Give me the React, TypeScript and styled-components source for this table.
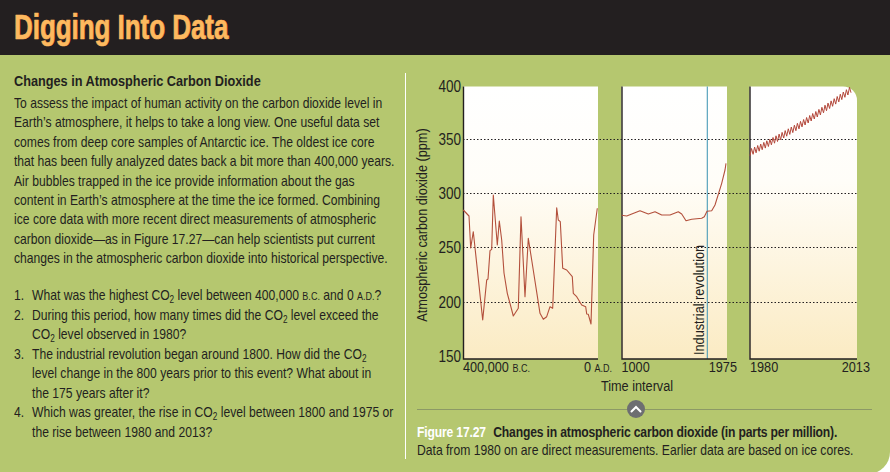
import React from 'react';
import styled, { createGlobalStyle } from 'styled-components';

const GlobalStyle = createGlobalStyle`
  html, body {
    margin: 0;
    padding: 0;
    overflow: hidden;
    background: #ffffff;
  }
  * {
    box-sizing: border-box;
  }
`;

// no condensed face is installed, so Arial metrics get squeezed horizontally
const sans = `"Liberation Sans", Arial, sans-serif`;
const SQUEEZE = 0.82;

const Page = styled.div`
  width: 890px;
  height: 472px;
  overflow: hidden;
  background: #ffffff;
  font-family: ${sans};
  color: #231f20;
`;

const Header = styled.header`
  height: 55px;
  background: #231f20;
  padding: 4px 0 0 14px;
`;

const Title = styled.h1`
  display: inline-block;
  margin: 0;
  font-size: 35px;
  line-height: 46px;
  font-weight: bold;
  white-space: nowrap;
  color: #fdb95f;
  -webkit-text-stroke: 0.7px #fdb95f;
  text-shadow: 1px 0 0 #7c3517;
  transform: scaleX(0.74);
  transform-origin: 0 0;
`;

const Body = styled.main`
  display: grid;
  grid-template-columns: 405px minmax(0, 1fr);
  height: 419px;
  background: #b5c76f;
  border-bottom-right-radius: 22px;
  overflow: hidden;
`;

const TextColumn = styled.section`
  padding: 17px 0 0 14px;
  overflow: hidden;
`;

const Condensed = styled.div`
  width: 480px;
  transform: scaleX(${SQUEEZE});
  transform-origin: 0 0;
  white-space: nowrap;
`;

const Heading = styled.h2`
  margin: 0;
  font-size: 15.5px;
  line-height: 18px;
  font-weight: bold;
`;

const Intro = styled.p`
  margin: 4px 0 0;
  font-size: 14.8px;
  line-height: 19.4px;
`;

const Questions = styled.ol`
  margin: 17px 0 0;
  padding: 0;
  list-style: none;
  font-size: 14.8px;
  line-height: 19.4px;
`;

const Question = styled.li`
  display: grid;
  grid-template-columns: 22px 1fr;
`;

const Sub = styled.sub`
  font-size: 10px;
  line-height: 0;
  vertical-align: -3px;
`;

const SmallCaps = styled.span`
  font-size: 11px;
`;

const FigureColumn = styled.section`
  min-width: 0;
  margin: 18px 0 17px;
  border-left: 1px solid #ffffff;
  display: flex;
  flex-direction: column;
`;

const ChartSvg = styled.svg`
  display: block;
  width: 484px;
  height: 322px;
  font-family: ${sans};
`;

const AxisText = styled.text<{ $size?: number }>`
  font-size: ${p => p.$size ?? 15.5}px;
  fill: #231f20;
`;

const CaptionBar = styled.div`
  position: relative;
  height: 18px;
  margin: 5px 18px 0 11px;
  display: flex;
  align-items: center;
`;

const Rule = styled.div`
  flex: 1;
  height: 1px;
  background: #8c9966;
`;

const Toggle = styled.button`
  position: absolute;
  left: 210px;
  top: 0;
  width: 18px;
  height: 18px;
  padding: 0;
  border: none;
  border-radius: 50%;
  background: #6d6e71;
  display: flex;
  align-items: center;
  justify-content: center;
`;

const CaptionWrap = styled.div`
  margin: 5px 0 0 11px;
  overflow: hidden;
`;

const Caption = styled.p`
  margin: 0;
  width: 560px;
  font-size: 14.8px;
  line-height: 18px;
  white-space: nowrap;
  transform: scaleX(${SQUEEZE});
  transform-origin: 0 0;
`;

const FigureLabel = styled.span`
  color: #ffffff;
  font-weight: bold;
  letter-spacing: -0.2px;
  margin-right: 9px;
`;

const CaptionTitle = styled.span`
  font-weight: bold;
  letter-spacing: -0.2px;
`;

const CO2 = () => (
  <>
    CO<Sub>2</Sub>
  </>
);

type LabelProps = {
  x: number;
  y: number;
  anchor?: 'start' | 'middle' | 'end';
  rotate?: boolean;
  size?: number;
  children: React.ReactNode;
};

const Label = ({ x, y, anchor = 'start', rotate, size, children }: LabelProps) => (
  <AxisText
    $size={size}
    textAnchor={anchor}
    transform={`translate(${x} ${y})${rotate ? ' rotate(-90)' : ''} scale(${SQUEEZE} 1)`}
  >
    {children}
  </AxisText>
);

const iceCore =
  '463.3,210 469,216 470.7,248 473.3,231.7 482.7,320 486.7,280 488,279 490,250.7 491.7,249.3 493.3,195 497.3,245 499.3,221 501.7,240 504,273 507.3,293.3 513.3,316 518.3,308.3 521,216.7 525,296.7 528.3,238.3 531.7,260 540,313.3 543.3,319.3 546.7,316.7 550,306.7 552.7,308.3 556.7,207.7 558.3,220 560.3,221.7 562.7,268.3 566.7,270 572.3,276.7 573.3,293.3 576.7,296.7 581.7,305 585.7,306.7 586.7,314 588.3,314.3 591,324 593.7,235 597.3,208.3';

const millennium =
  '621.7,215.3 626.7,216 640,210.7 648.3,214 655,211.7 661.7,215 670,215 678.3,211.7 681.7,214 686,220.7 691.7,219.3 701.7,218.3 704.3,216.7 707,211.3 711.7,210.7 715,205 721.7,183.3 725,170 726,163.3';

const yOf = (ppm: number) => 86 + (400 - ppm) * 1.085;

const keeling = (() => {
  const pts: string[] = [];
  const x0 = 750;
  const x1 = 851;
  const steps = 66;
  for (let i = 0; i <= steps; i++) {
    const t = (i / steps) * 33;
    const base = 338.7 + 1.35 * t + 0.0125 * t * t;
    const season = i % 2 === 0 ? -3 : 3;
    const x = x0 + ((x1 - x0) * i) / steps;
    pts.push(`${x.toFixed(1)},${yOf(base + season).toFixed(1)}`);
  }
  return pts.join(' ');
})();

const gridLines = [139.5, 193.5, 247.5, 302.5];
const yTicks = [
  { label: '400', y: 86.5 },
  { label: '350', y: 139.5 },
  { label: '300', y: 193.5 },
  { label: '250', y: 247.5 },
  { label: '200', y: 302.5 },
  { label: '150', y: 357 },
];

const CarbonChart = () => (
  <ChartSvg viewBox="406 73 484 322">
    <defs>
      <linearGradient id="iceFill" x1="0" y1="0" x2="0" y2="1">
        <stop offset="0" stopColor="#ffffff" />
        <stop offset="0.35" stopColor="#fffdf8" />
        <stop offset="1" stopColor="#fbebc3" />
      </linearGradient>
    </defs>

    <rect x="463" y="86.5" width="135" height="272.5" fill="url(#iceFill)" />
    <rect x="621.5" y="86.5" width="105.5" height="272.5" fill="url(#iceFill)" />
    <path d="M749.5 86.5 H843 A14 14 0 0 1 857 100.5 V359 H749.5 Z" fill="url(#iceFill)" />

    {gridLines.map(y => (
      <line key={y} x1="463" x2="857" y1={y} y2={y} stroke="#231f20" strokeWidth="1.2" strokeDasharray="1.5 2" />
    ))}

    <line x1="707.3" x2="707.3" y1="86.5" y2="359" stroke="#4a9bb8" strokeWidth="1.1" />

    <path d="M463.5 86.5 V359 H598" fill="none" stroke="#231f20" strokeWidth="1.4" />
    <path d="M622 86.5 V359 H727" fill="none" stroke="#231f20" strokeWidth="1.4" />
    <path d="M750 86.5 V359 H857" fill="none" stroke="#231f20" strokeWidth="1.4" />

    <polyline points={iceCore} fill="none" stroke="#b3503c" strokeWidth="1.1" strokeLinejoin="round" />
    <polyline points={millennium} fill="none" stroke="#b3503c" strokeWidth="1.1" strokeLinejoin="round" />
    <polyline points={keeling} fill="none" stroke="#b3473a" strokeWidth="1" strokeLinejoin="round" />

    {yTicks.map(t => (
      <Label key={t.label} x={461} y={t.y + 5} anchor="end" size={16.5}>
        {t.label}
      </Label>
    ))}

    <Label x={427} y={225} anchor="middle" rotate>
      Atmospheric carbon dioxide (ppm)
    </Label>
    <Label x={704} y={355} rotate>
      Industrial revolution
    </Label>

    <Label x={463} y={372}>
      400,000 <tspan fontSize="11">B.C.</tspan>
    </Label>
    <Label x={612} y={372} anchor="end">
      0 <tspan fontSize="11">A.D.</tspan>
    </Label>
    <Label x={621.5} y={372}>1000</Label>
    <Label x={737} y={372} anchor="end">1975</Label>
    <Label x={750} y={372}>1980</Label>
    <Label x={870} y={372} anchor="end">2013</Label>
    <Label x={637} y={391} anchor="middle">Time interval</Label>
  </ChartSvg>
);

const App: React.FC = () => {
  return (
    <>
      <GlobalStyle />
      <Page>
        <Header>
          <Title>Digging Into Data</Title>
        </Header>
        <Body>
          <TextColumn>
            <Condensed>
              <Heading>Changes in Atmospheric Carbon Dioxide</Heading>
              <Intro>
                To assess the impact of human activity on the carbon dioxide level in
                <br />
                Earth’s atmosphere, it helps to take a long view. One useful data set
                <br />
                comes from deep core samples of Antarctic ice. The oldest ice core
                <br />
                that has been fully analyzed dates back a bit more than 400,000 years.
                <br />
                Air bubbles trapped in the ice provide information about the gas
                <br />
                content in Earth’s atmosphere at the time the ice formed. Combining
                <br />
                ice core data with more recent direct measurements of atmospheric
                <br />
                carbon dioxide—as in Figure 17.27—can help scientists put current
                <br />
                changes in the atmospheric carbon dioxide into historical perspective.
              </Intro>
              <Questions>
                <Question>
                  <span>1.</span>
                  <span>
                    What was the highest <CO2 /> level between 400,000 <SmallCaps>B.C.</SmallCaps> and 0{' '}
                    <SmallCaps>A.D.</SmallCaps>?
                  </span>
                </Question>
                <Question>
                  <span>2.</span>
                  <span>
                    During this period, how many times did the <CO2 /> level exceed the
                    <br />
                    <CO2 /> level observed in 1980?
                  </span>
                </Question>
                <Question>
                  <span>3.</span>
                  <span>
                    The industrial revolution began around 1800. How did the <CO2 />
                    <br />
                    level change in the 800 years prior to this event? What about in
                    <br />
                    the 175 years after it?
                  </span>
                </Question>
                <Question>
                  <span>4.</span>
                  <span>
                    Which was greater, the rise in <CO2 /> level between 1800 and 1975 or
                    <br />
                    the rise between 1980 and 2013?
                  </span>
                </Question>
              </Questions>
            </Condensed>
          </TextColumn>
          <FigureColumn>
            <CarbonChart />
            <CaptionBar>
              <Rule />
              <Toggle aria-label="Collapse figure">
                <svg width="12" height="8" viewBox="0 0 12 8">
                  <path d="M1.5 6.5 L6 2 L10.5 6.5" fill="none" stroke="#ffffff" strokeWidth="2" strokeLinecap="round" />
                </svg>
              </Toggle>
            </CaptionBar>
            <CaptionWrap>
              <Caption>
                <FigureLabel>Figure 17.27</FigureLabel>
                <CaptionTitle>Changes in atmospheric carbon dioxide (in parts per million).</CaptionTitle>
                <br />
                Data from 1980 on are direct measurements. Earlier data are based on ice cores.
              </Caption>
            </CaptionWrap>
          </FigureColumn>
        </Body>
      </Page>
    </>
  );
};

export default App;
